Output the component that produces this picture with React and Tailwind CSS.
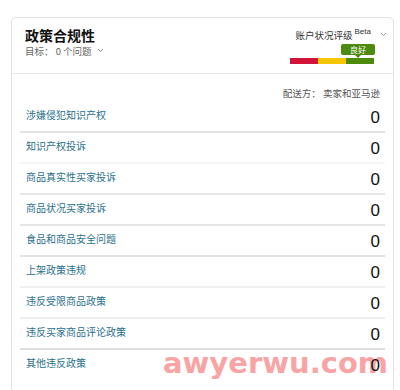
import React from 'react';

const rows = [
    { label: '涉嫌侵犯知识产权', line: 'border-[#e2e2e2]' },
    { label: '知识产权投诉', line: 'border-[#f5f5f5]' },
    { label: '商品真实性买家投诉', line: 'border-[#e5e5e5]' },
    { label: '商品状况买家投诉', line: 'border-[#e5e5e5]' },
    { label: '食品和商品安全问题', line: 'border-[#e2e2e2]' },
    { label: '上架政策违规', line: 'border-[#f0f0f0]' },
    { label: '违反受限商品政策', line: 'border-[#eeeeee]' },
    { label: '违反买家商品评论政策', line: 'border-[#dedede]' },
    { label: '其他违反政策', line: 'border-transparent' },
];

const font = { fontFamily: '"Noto Sans CJK SC", "Liberation Sans", sans-serif' };

export default function App() {
    return (
        <div className="relative w-[400px] h-[390px] overflow-hidden bg-white pt-[17px] pl-[11px]" style={font}>
            {/* watermark, sits under the card text */}
            <div className="absolute left-[163px] top-[347px] text-[29px] font-bold text-[#f9a4a4] leading-[32px] pointer-events-none" style={{ fontFamily: '"DejaVu Sans", sans-serif' }}>
                awyerwu.com
            </div>

            <div className="relative w-[383px] h-[400px] border border-[#e2e2e2] rounded-t-[5px]">

                {/* Header */}
                <div className="flex justify-between h-[56px] border-b border-[#e6e6e6]">
                    <div className="pl-[13px] pt-[8px]">
                        <h2 className="text-[14px] font-bold text-[#111] leading-[18px]">政策合规性</h2>
                        <div className="flex items-center gap-[5px] mt-[1px] text-[9.5px] text-[#666] leading-[12px]">
                            <span>目标： 0 个问题</span>
                            <svg width="7" height="5" viewBox="0 0 7 5" className="mt-[-2px]">
                                <path d="M1 1l2.5 2.5L6 1" stroke="#888" strokeWidth="1" fill="none" />
                            </svg>
                        </div>
                    </div>
                    <div className="flex flex-col items-end pr-[6px] pt-[9px]">
                        <div className="flex items-start">
                            <span className="text-[9.5px] text-[#333] leading-[12px] mt-[2px]">账户状况评级</span>
                            <span className="text-[8px] text-[#333] leading-[9px] ml-[2px]" style={{ fontFamily: '"Liberation Sans", sans-serif' }}>Beta</span>
                            <svg width="7" height="5" viewBox="0 0 7 5" className="ml-[9px] mt-[5px]">
                                <path d="M1 1l2.5 2.5L6 1" stroke="#999" strokeWidth="1" fill="none" />
                            </svg>
                        </div>
                        <div className="mr-[13px] mt-[3px] flex flex-col items-center w-[84px]">
                            <div className="self-end relative w-[34px] h-[11px] bg-[#4f8a10] rounded-[2px] flex items-center justify-center text-white text-[8px] leading-[10px] mr-[-1px]">
                                良好
                                <span className="absolute left-1/2 -translate-x-1/2 top-[11px] w-0 h-0 border-l-[3px] border-r-[3px] border-t-[3px] border-l-transparent border-r-transparent border-t-[#4f8a10]" />
                            </div>
                            <div className="flex mt-[3px] h-[6px] w-[84px]">
                                <div className="flex-1 bg-[#d2143a]" />
                                <div className="flex-1 bg-[#f7c600]" />
                                <div className="flex-1 bg-[#4e8b0c]" />
                            </div>
                        </div>
                    </div>
                </div>

                {/* Fulfilled by */}
                <div className="flex justify-end pr-[13px] pt-[13px] h-[28px] text-[9.5px] text-[#555] leading-[12px]">
                    配送方： 卖家和亚马逊
                </div>

                {/* Rows */}
                <div className="mx-[8px]">
                    {rows.map((row) => (
                        <div key={row.label} className={`flex justify-between items-center h-[31px] border-b-2 ${row.line}`}>
                            <span className="pl-[6px] pb-[4px] text-[10px] text-[#2a6f8c] leading-[14px]">{row.label}</span>
                            <span className="pr-[5px] pt-[2px] text-[17px] text-[#111] leading-[18px]" style={{ fontFamily: '"Liberation Sans", sans-serif' }}>0</span>
                        </div>
                    ))}
                </div>
            </div>
        </div>
    );
}
